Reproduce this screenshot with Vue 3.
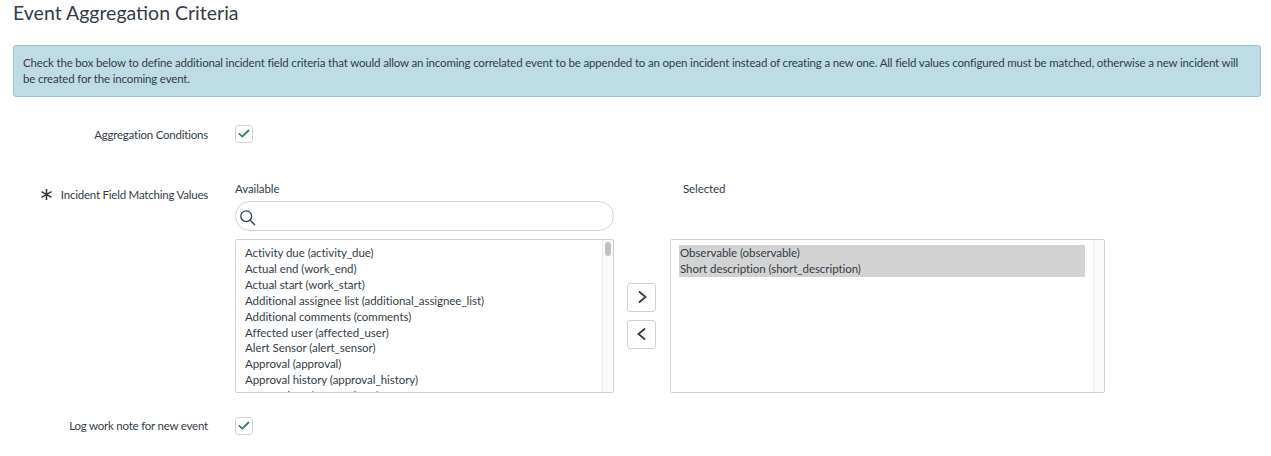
<template>
  <div class="page">
    <h1 class="title">Event Aggregation Criteria</h1>
    <div class="alert">
      Check the box below to define additional incident field criteria that would allow an incoming correlated event to be appended to an open incident instead of creating a new one. All field values configured must be matched, otherwise a new incident will be created for the incoming event.
    </div>

    <div class="row row-first">
      <div class="label">Aggregation Conditions</div>
      <span class="checkbox">
        <svg viewBox="0 0 18 18" width="18" height="18"><path d="M3.8 8.4 L7.4 11.6 L14 5" /></svg>
      </span>
    </div>

    <div class="row row-lists">
      <div class="label label-lists">
        <svg class="required" viewBox="0 0 14 14" width="13" height="13">
          <path d="M7 1 V13 M1.6 3.9 L12.4 10.1 M12.4 3.9 L1.6 10.1" />
        </svg>
        Incident Field Matching Values
      </div>
      <div class="slush">
        <div class="cap">Available</div>
        <div></div>
        <div class="cap cap-selected">Selected</div>

        <div class="search">
          <svg viewBox="0 0 18 18" width="18" height="18">
            <circle cx="7.2" cy="7.2" r="5.4" />
            <path d="M11.2 11.2 L16 16" />
          </svg>
        </div>
        <div></div>
        <div></div>

        <div class="list">
          <div class="items">
            <div v-for="item in available" :key="item">{{ item }}</div>
          </div>
          <div class="track"><span class="thumb"></span></div>
        </div>
        <div class="moves">
          <button class="move">
            <svg viewBox="0 0 12 16" width="12" height="16"><path d="M3 2.5 L9.5 8 L3 13.5" /></svg>
          </button>
          <button class="move">
            <svg viewBox="0 0 12 16" width="12" height="16"><path d="M9 2.5 L2.5 8 L9 13.5" /></svg>
          </button>
        </div>
        <div class="list">
          <div class="items items-selected">
            <div class="picked" v-for="item in selected" :key="item">{{ item }}</div>
          </div>
          <div class="track"></div>
        </div>
      </div>
    </div>

    <div class="row row-last">
      <div class="label">Log work note for new event</div>
      <span class="checkbox">
        <svg viewBox="0 0 18 18" width="18" height="18"><path d="M3.8 8.4 L7.4 11.6 L14 5" /></svg>
      </span>
    </div>
  </div>
</template>

<script setup>
const available = [
  'Activity due (activity_due)',
  'Actual end (work_end)',
  'Actual start (work_start)',
  'Additional assignee list (additional_assignee_list)',
  'Additional comments (comments)',
  'Affected user (affected_user)',
  'Alert Sensor (alert_sensor)',
  'Approval (approval)',
  'Approval history (approval_history)',
  'Approval set (approval_set)',
]

const selected = ['Observable (observable)', 'Short description (short_description)']
</script>

<style>
html, body {
  background: #fff;
}
</style>

<style scoped>
.page {
  width: 1271px;
  height: 456px;
  overflow: hidden;
  box-sizing: border-box;
  padding: 0 10px 0 13px;
  font-family: Lato, "Liberation Sans", sans-serif;
  font-size: 11.5px;
  letter-spacing: -0.05px;
  color: #343d47;
}
.title {
  margin: 0;
  height: 45px;
  font-size: 19.5px;
  font-weight: 400;
  letter-spacing: 0;
  line-height: 25px;
}
.alert {
  box-sizing: border-box;
  height: 52px;
  padding: 9px 9px;
  line-height: 16px;
  letter-spacing: -0.17px;
  background: #bedce4;
  border: 1px solid #8fc8d8;
  border-radius: 3px;
}
.row {
  display: flex;
}
.label {
  width: 195px;
  text-align: right;
  margin-right: 27px;
  flex: none;
  letter-spacing: -0.22px;
}
.row-first {
  margin-top: 28px;
  height: 18px;
  line-height: 20px;
}
.row-lists {
  margin-top: 37px;
}
.label-lists {
  display: flex;
  justify-content: flex-end;
  align-items: center;
  gap: 8px;
  height: 16px;
  margin-top: 6px;
}
.required {
  fill: none;
  stroke: #343d47;
  stroke-width: 1.7;
}
.checkbox {
  display: block;
  width: 18px;
  height: 18px;
  box-sizing: border-box;
  border: 1px solid #cfd2d4;
  border-radius: 3px;
  background: #fff;
}
.checkbox svg {
  display: block;
  margin: -1px;
  fill: none;
  stroke: #2f7d6c;
  stroke-width: 1.8;
}
.slush {
  display: grid;
  grid-template-columns: 379px 56px 435px;
  grid-template-rows: 21px 30px 162px;
}
.cap {
  line-height: 17px;
  letter-spacing: -0.1px;
}
.cap-selected {
  padding-left: 13px;
}
.search {
  display: flex;
  align-items: center;
  box-sizing: border-box;
  padding: 3px 0 0 3px;
  border: 1px solid #cfd2d4;
  border-radius: 15px;
}
.search svg {
  fill: none;
  stroke: #343d47;
  stroke-width: 1.3;
}
.list {
  display: flex;
  box-sizing: border-box;
  margin-top: 8px;
  height: 154px;
  border: 1px solid #cfd2d4;
  border-radius: 2px;
  overflow: hidden;
}
.items {
  flex: 1;
  min-width: 0;
  padding: 5px 0 0 9px;
  line-height: 15.9px;
  white-space: nowrap;
  overflow: hidden;
}
.items-selected {
  padding: 5px 8px 0 8px;
}
.picked {
  background: #d3d3d3;
  padding-left: 1px;
}
.track {
  flex: none;
  width: 10px;
  background: #fafafa;
  border-left: 1px solid #eeeeee;
  position: relative;
}
.thumb {
  position: absolute;
  top: 2px;
  left: 2px;
  width: 6px;
  height: 14px;
  border-radius: 3px;
  background: #c2c2c2;
}
.moves {
  display: flex;
  flex-direction: column;
  align-items: flex-start;
  gap: 8.5px;
  padding: 44px 0 0 13px;
  box-sizing: border-box;
  margin-top: 8px;
}
.move {
  display: flex;
  align-items: center;
  justify-content: center;
  width: 29px;
  height: 28.5px;
  padding: 0;
  background: #fff;
  border: 1px solid #cfd2d4;
  border-radius: 3px;
}
.move svg {
  fill: none;
  stroke: #343d47;
  stroke-width: 1.8;
}
.row-last {
  margin-top: 24px;
  height: 18px;
  line-height: 18px;
}
</style>
